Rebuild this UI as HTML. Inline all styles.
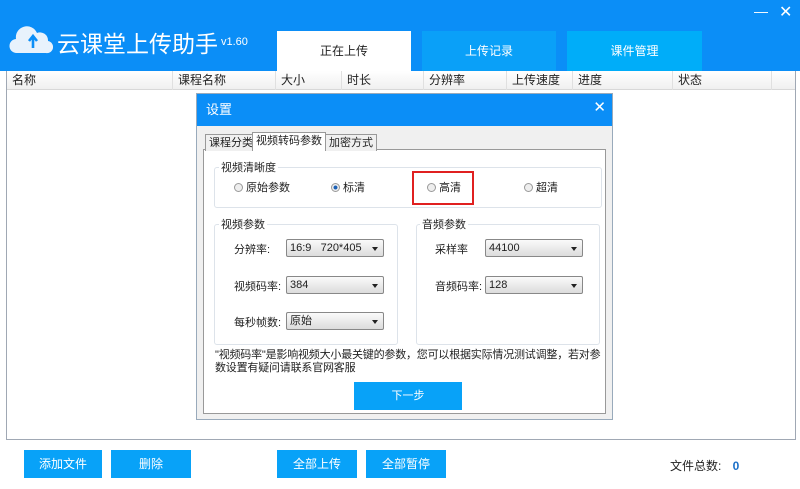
<!DOCTYPE html>
<html><head><meta charset="utf-8"><style>
*{margin:0;padding:0;box-sizing:border-box}
body{width:800px;height:489px;background:#fff;font-family:"Liberation Sans","Noto Sans CJK SC",sans-serif;font-size:12px;color:#222;position:relative;overflow:hidden}
.a{position:absolute}
.hdr{left:0;top:0;width:800px;height:71px;background:#0b8ef7}
.tab{top:31px;height:40px;text-align:center;line-height:40px;color:#fff;font-size:12px}
.list{left:6px;top:71px;width:790px;height:369px;border:1px solid #a0a8b4;border-top:none;background:#fff}
.colh{top:71px;height:19px;line-height:19px;background:linear-gradient(#fff,#f0f0f0);border-bottom:1px solid #d8d8d8;left:7px;width:788px}
.colh span{position:absolute;top:0;border-left:1px solid #e0e0e0;padding-left:5px;height:19px}
.btn{top:450px;height:28px;background:#08a2f8;color:#fff;text-align:center;line-height:28px;font-size:12px}
.dlg{left:196px;top:93px;width:417px;height:327px;background:#f0f0f0;border:1px solid #9ab}
.dt{left:0;top:0;width:415px;height:32px;background:#0b8ef7;color:#fff;font-size:13px;line-height:32px;padding-left:9px}
.panel{left:6px;top:55px;width:403px;height:265px;background:#fff;border:1px solid #999}
.grp{border:1px solid #dde3ea;border-radius:3px}
.gl{background:#fff;padding:0 2px;font-size:11px}
.sel{height:18px;border:1px solid #888;border-radius:2px;background:linear-gradient(#fafafa,#dcdcdc);font-size:11px;line-height:16px;padding-left:3px}
.sel:after{content:"";position:absolute;right:5px;top:7px;border:3.5px solid transparent;border-top:4px solid #222}
.rd{width:9px;height:9px;border:1px solid #999;border-radius:50%;background:#eee;top:3px}
.lb{font-size:11px}
.ttab{top:40px;height:17px;border:1px solid #999;border-bottom:none;background:#f0f0f0;font-size:11px;line-height:16px;padding:0 3px}
</style></head><body>
<div class="a hdr"></div>
<svg class="a" style="left:9px;top:24px" width="44" height="30" viewBox="0 0 44 30"><path d="M8 29a7 7 0 0 1-1-14a11 11 0 0 1 21-6a8 8 0 0 1 11 8a6 6 0 0 1-2 12z" fill="#e8f2fc"/><path d="M24 24V14M20 17l4-5 4 5" stroke="#0b8ef7" stroke-width="2.6" fill="none"/></svg>
<div class="a" style="left:57px;top:25px;color:#fff;font-size:23px">云课堂上传助手</div>
<div class="a" style="left:221px;top:36px;color:#fff;font-size:11px">v1.60</div>
<div class="a" style="left:754px;top:3px;color:#fff;font-size:14px">—</div>
<div class="a" style="left:779px;top:2px;color:#fff;font-size:16px">✕</div>
<div class="a tab" style="left:277px;width:134px;background:#fff;color:#222">正在上传</div>
<div class="a tab" style="left:422px;width:134px;background:#0aa0f8">上传记录</div>
<div class="a tab" style="left:567px;width:135px;background:#00adf9">课件管理</div>
<div class="a list"></div>
<div class="a colh"><span style="left:0;border:none">名称</span><span style="left:165px">课程名称</span><span style="left:268px">大小</span><span style="left:334px">时长</span><span style="left:416px">分辨率</span><span style="left:499px">上传速度</span><span style="left:565px">进度</span><span style="left:665px">状态</span><span style="left:764px"></span></div>
<div class="a dlg">
<div class="a dt">设置</div>
<div class="a" style="right:6px;top:4px;color:#fff;font-size:15px">✕</div>
<div class="a panel"></div>
<div class="a ttab" style="left:8px">课程分类</div>
<div class="a ttab" style="left:55px;top:38px;height:19px;background:#fff">视频转码参数</div>
<div class="a ttab" style="left:128px">加密方式</div>
<div class="a grp" style="left:17px;top:73px;width:388px;height:41px"></div>
<div class="a gl" style="left:22px;top:65px">视频清晰度</div>
<div class="a rd" style="left:37px;top:89px"></div><div class="a lb" style="left:49px;top:85px">原始参数</div>
<div class="a rd" style="left:134px;top:89px;background:radial-gradient(#1a5fb4 35%,#eee 45%)"></div><div class="a lb" style="left:146px;top:85px">标清</div>
<div class="a" style="left:215px;top:77px;width:62px;height:34px;border:2px solid #e02020"></div>
<div class="a rd" style="left:230px;top:89px"></div><div class="a lb" style="left:242px;top:85px">高清</div>
<div class="a rd" style="left:327px;top:89px"></div><div class="a lb" style="left:339px;top:85px">超清</div>
<div class="a grp" style="left:17px;top:130px;width:184px;height:121px"></div>
<div class="a gl" style="left:22px;top:122px">视频参数</div>
<div class="a grp" style="left:219px;top:130px;width:184px;height:121px"></div>
<div class="a gl" style="left:223px;top:122px">音频参数</div>
<div class="a lb" style="left:37px;top:147px">分辨率:</div><div class="a sel" style="left:89px;top:145px;width:98px">16:9 &nbsp; 720*405</div>
<div class="a lb" style="left:37px;top:184px">视频码率:</div><div class="a sel" style="left:89px;top:182px;width:98px">384</div>
<div class="a lb" style="left:37px;top:220px">每秒帧数:</div><div class="a sel" style="left:89px;top:218px;width:98px">原始</div>
<div class="a lb" style="left:238px;top:147px">采样率</div><div class="a sel" style="left:288px;top:145px;width:98px">44100</div>
<div class="a lb" style="left:238px;top:184px">音频码率:</div><div class="a sel" style="left:288px;top:182px;width:98px">128</div>
<div class="a lb" style="left:18px;top:255px;width:395px;line-height:13px;letter-spacing:-0.2px">"视频码率"是影响视频大小最关键的参数，您可以根据实际情况测试调整，若对参数设置有疑问请联系官网客服</div>
<div class="a" style="left:157px;top:288px;width:108px;height:28px;background:#08a2f8;color:#fff;text-align:center;line-height:28px;font-size:11px">下一步</div>
</div>
<div class="a btn" style="left:24px;width:78px">添加文件</div>
<div class="a btn" style="left:111px;width:80px">删除</div>
<div class="a btn" style="left:277px;width:80px">全部上传</div>
<div class="a btn" style="left:366px;width:80px">全部暂停</div>
<div class="a" style="left:670px;top:457px;font-size:12px">文件总数: <b style="color:#1a6fc8;margin-left:8px">0</b></div>
</body></html>
